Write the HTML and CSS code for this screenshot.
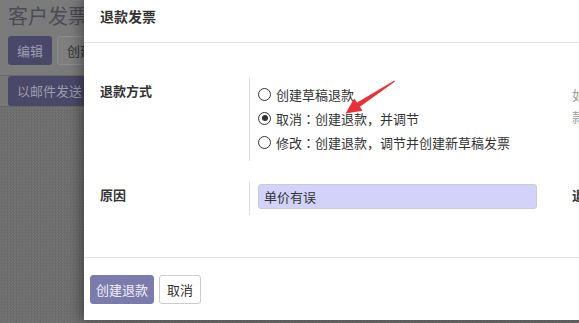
FILE: index.html
```html
<!DOCTYPE html>
<html lang="zh">
<head>
  <meta charset="UTF-8" />
  <title>退款发票</title>
  <link rel="stylesheet" href="styles.css">
</head>
<body>
  <div class="page">
    <div class="page-top">
      <h1 class="page-title">客户发票</h1>
      <div class="page-actions">
        <span class="pbtn pbtn--dark">编辑</span>
        <span class="pbtn pbtn--light">创建</span>
      </div>
    </div>
    <div class="page-status">
      <span class="pbtn pbtn--dark">以邮件发送</span>
    </div>
    <div class="page-sheet"></div>
  </div>

  <div class="modal">
    <div class="modal-header">
      <h4 class="modal-title">退款发票</h4>
    </div>
    <div class="modal-body">
      <div class="form-grid">
        <div class="field">
          <div class="field-label">退款方式</div>
          <div class="field-value">
            <label class="radio"><span class="radio-dot"></span>创建草稿退款</label>
            <label class="radio"><span class="radio-dot radio-dot--on"></span>取消<span class="punct">：</span>创建退款，并调节</label>
            <label class="radio"><span class="radio-dot"></span>修改<span class="punct">：</span>创建退款，调节并创建新草稿发票</label>
          </div>
        </div>
        <div class="field field--side">
          <div class="side-help">如果退款<br>款</div>
        </div>
        <div class="field field--reason">
          <div class="field-label">原因</div>
          <div class="field-value">
            <div class="input">单价有误</div>
          </div>
        </div>
        <div class="field field--side">
          <div class="field-label">退款日期</div>
        </div>
      </div>
    </div>
    <div class="modal-footer">
      <button class="btn btn--primary">创建退款</button>
      <button class="btn">取消</button>
    </div>
  </div>

  <svg class="arrow" width="60" height="42" viewBox="0 0 60 42">
    <polygon points="54.4,4.6 55,5.6 19.9,30.8 22.6,34.8 5.5,37.5 14.2,22.6 17.1,26.6" fill="#e8313a" />
  </svg>
</body>
</html>
```

FILE: styles.css
```css
* {
  box-sizing: border-box;
  margin: 0;
  padding: 0;
}
body {
  width: 579px;
  height: 323px;
  overflow: hidden;
  position: relative;
  font-family: "Noto Sans CJK SC", "Noto Sans", sans-serif;
  font-size: 13px;
  color: #333;
  background: #6f6f6f;
}

/* dimmed page behind the dialog */
.page-top {
  background: #7b7b7b;
  padding: 2px 8px 0;
  height: 76px;
  border-bottom: 1px solid #6a6a6a;
}
.page-title {
  font-size: 20px;
  font-weight: 400;
  color: #4b4b58;
  line-height: 28px;
}
.page-actions {
  display: flex;
  gap: 5px;
  margin-top: 6px;
}
.pbtn {
  display: inline-block;
  height: 29px;
  line-height: 29px;
  padding: 0 9px;
  border-radius: 3px;
  font-size: 13px;
}
.pbtn--dark {
  background: #4a4868;
  color: #9d9cae;
}
.pbtn--light {
  background: #7f7f7f;
  border: 1px solid #8c8c8c;
  color: #333;
  line-height: 27px;
}
.page-status {
  background: #777;
  height: 31px;
  padding: 0 8px;
  border-bottom: 1px solid #666;
}
.page-status .pbtn {
  height: 30px;
  line-height: 30px;
}
.page-sheet {
  height: 220px;
  background: repeating-conic-gradient(#6b6b6b 0 25%, #747474 0 50%) 0 0 / 3px 3px;
}

/* dialog */
.modal {
  position: absolute;
  left: 84px;
  top: -2px;
  width: 760px;
  height: 322px;
  background: #fff;
  box-shadow: -4px 0 12px rgba(0, 0, 0, 0.35);
  display: flex;
  flex-direction: column;
}
.modal-header {
  height: 45px;
  padding: 8px 16px 0;
  border-bottom: 1px solid #e5e5e5;
}
.modal-title {
  font-size: 14px;
  font-weight: 700;
  line-height: 20px;
  color: #333;
}
.modal-body {
  flex: 1;
  padding: 35px 16px 0;
}
.form-grid {
  display: grid;
  grid-template-columns: 455px 1fr;
  column-gap: 17px;
  row-gap: 21px;
}
.field {
  display: flex;
}
.field-label {
  width: 149px;
  flex: none;
  font-weight: 700;
  line-height: 20px;
  padding-top: 3px;
}
.field-value {
  flex: 1;
  border-left: 1px solid #ddd;
  padding: 4px 0 7px 8px;
}
.field--reason .field-value {
  padding: 2px 0 6px 8px;
}
.radio {
  display: flex;
  align-items: center;
  height: 24px;
  color: #333;
  white-space: nowrap;
}
.punct {
  font-family: "Noto Sans CJK TC", sans-serif;
}
.radio-dot {
  width: 13px;
  height: 13px;
  border: 1px solid #333;
  border-radius: 50%;
  margin-right: 5px;
  position: relative;
  flex: none;
}
.radio-dot--on::after {
  content: "";
  position: absolute;
  left: 2.5px;
  top: 2.5px;
  width: 6px;
  height: 6px;
  border-radius: 50%;
  background: #333;
}
.input {
  width: 279px;
  height: 25px;
  line-height: 23px;
  padding: 0 5px;
  background: #d2d2fb;
  border: 1px solid #ccc;
  border-radius: 3px;
}
.side-help {
  color: #999;
  line-height: 22px;
  padding-top: 6px;
}
.field--side .field-label {
  padding-top: 3px;
}
.modal-footer {
  height: 63px;
  border-top: 1px solid #e5e5e5;
  padding: 17px 6px 0;
  display: flex;
  gap: 5px;
  align-items: flex-start;
}
.btn {
  height: 29px;
  padding: 0 7px;
  font-family: inherit;
  font-size: 13px;
  border: 1px solid #ccc;
  border-radius: 3px;
  background: #fff;
  color: #333;
  white-space: nowrap;
}
.btn--primary {
  background: #7c7bad;
  border-color: #7c7bad;
  color: #f0f0f6;
  padding: 0 5px;
}

.arrow {
  position: absolute;
  left: 340px;
  top: 76px;
}
```
